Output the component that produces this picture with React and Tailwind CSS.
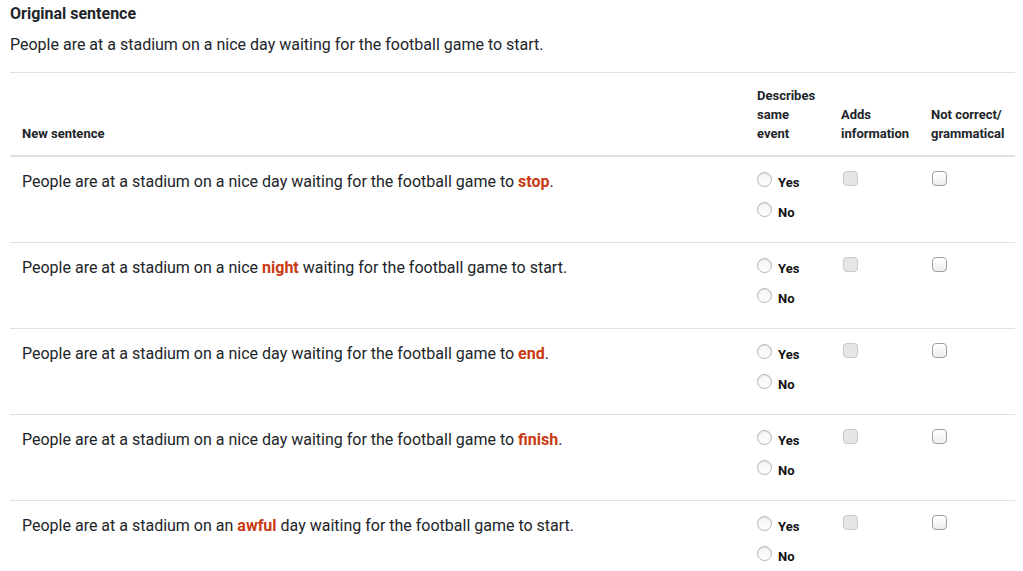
import React from "react";

const rows = [
  { pre: "People are at a stadium on a nice day waiting for the football game to ", hl: "stop", post: "." },
  { pre: "People are at a stadium on a nice ", hl: "night", post: " waiting for the football game to start." },
  { pre: "People are at a stadium on a nice day waiting for the football game to ", hl: "end", post: "." },
  { pre: "People are at a stadium on a nice day waiting for the football game to ", hl: "finish", post: "." },
  { pre: "People are at a stadium on an ", hl: "awful", post: " day waiting for the football game to start." },
];

const Radio = ({ label, tall }) => (
  <label className={tall ? "flex h-[31px] items-start gap-[6px]" : "flex h-[30px] items-start gap-[6px]"}>
    <span className="mt-[3px] block h-[15px] w-[15px] rounded-full border border-[#b4b4b4] bg-gradient-to-b from-[#f4f4f4] to-white shadow-[inset_0_1px_1px_rgba(0,0,0,0.08)]" />
    <span className="mt-[6px] text-[13px] font-bold leading-4 text-[#111]">{label}</span>
  </label>
);

const Box = ({ disabled }) => (
  <span
    className={
      disabled
        ? "mt-[2px] ml-[2px] block h-[15px] w-[15px] rounded-[4px] border border-[#c8c8c8] bg-[#e6e6e6]"
        : "mt-[2px] ml-[1px] block h-[15px] w-[15px] rounded-[4px] border border-[#a0a0a0] bg-gradient-to-b from-white to-[#eeeeee]"
    }
  />
);

export default function App() {
  return (
    <div className="min-h-screen bg-white px-[10px] pt-[3px] font-['Roboto',sans-serif] text-[#212529]">
      <h2 className="text-[16px] font-bold leading-[22px]">Original sentence</h2>
      <p className="mt-[9px] text-[16px] leading-[22px]">
        People are at a stadium on a nice day waiting for the football game to start.
      </p>
      <table className="mt-[16px] w-[1005px] table-fixed border-collapse border-t border-[#dee2e6]">
        <colgroup>
          <col className="w-[735px]" />
          <col className="w-[84px]" />
          <col className="w-[90px]" />
          <col className="w-[96px]" />
        </colgroup>
        <thead>
          <tr className="border-b-2 border-[#dee2e6] text-left align-bottom text-[13px] font-bold leading-[19px]">
            <th className="px-[12px] pt-[13px] pb-[12px]">New sentence</th>
            <th className="px-[12px] pt-[13px] pb-[12px]">Describes<br />same<br />event</th>
            <th className="px-[12px] pt-[13px] pb-[12px]">Adds<br />information</th>
            <th className="px-[12px] pt-[13px] pb-[12px]">Not correct/<br />grammatical</th>
          </tr>
        </thead>
        <tbody>
          {rows.map((r, i) => (
            <tr key={i} className="border-b border-[#dee2e6] align-top">
              <td className="p-[12px] text-[16px] leading-[26px]">
                {r.pre}
                <span className="font-bold text-[#c93a12]">{r.hl}</span>
                {r.post}
              </td>
              <td className="p-[12px]">
                <Radio label="Yes" />
                <Radio label="No" tall />
              </td>
              <td className="p-[12px]">
                <Box disabled />
              </td>
              <td className="p-[12px]">
                <Box />
              </td>
            </tr>
          ))}
        </tbody>
      </table>
    </div>
  );
}
